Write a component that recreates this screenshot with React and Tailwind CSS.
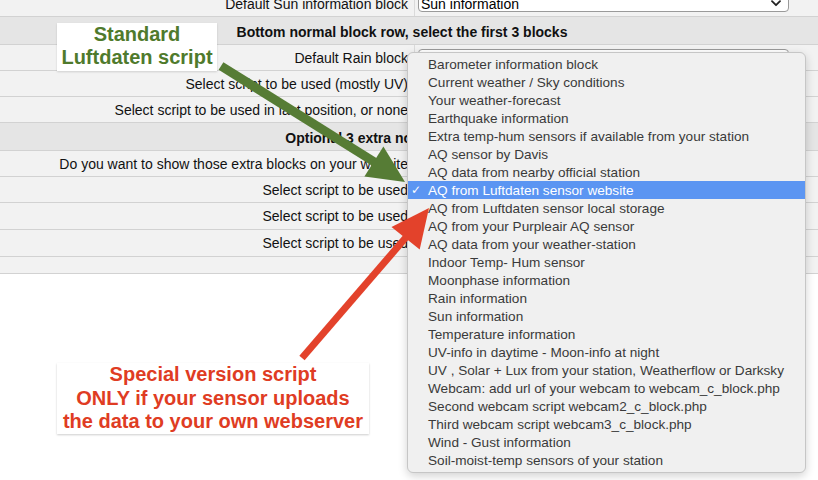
import React from "react";

const menuItems = [
  "Barometer information block",
  "Current weather / Sky conditions",
  "Your weather-forecast",
  "Earthquake information",
  "Extra temp-hum sensors if available from your station",
  "AQ sensor by Davis",
  "AQ data from nearby official station",
  "AQ from Luftdaten sensor website",
  "AQ from Luftdaten sensor local storage",
  "AQ from your Purpleair AQ sensor",
  "AQ data from your weather-station",
  "Indoor Temp- Hum sensor",
  "Moonphase information",
  "Rain information",
  "Sun information",
  "Temperature information",
  "UV-info in daytime - Moon-info at night",
  "UV , Solar + Lux from your station, Weatherflow or Darksky",
  "Webcam: add url of your webcam to webcam_c_block.php",
  "Second webcam script webcam2_c_block.php",
  "Third webcam script webcam3_c_block.php",
  "Wind - Gust information",
  "Soil-moist-temp sensors of your station",
];

const SELECTED = "AQ from Luftdaten sensor website";

function FakeSelect({ value }) {
  return (
    <div className="flex h-[17px] w-[371px] items-center justify-between rounded-[4px] border border-[#9a9a9a] bg-white pl-[2px] pr-[7px] text-[14px] leading-none text-black">
      <span>{value}</span>
      <svg width="10" height="7" viewBox="0 0 10 7">
        <path d="M1 1.2 L5 5.2 L9 1.2" fill="none" stroke="#222" strokeWidth="1.8" strokeLinecap="round" strokeLinejoin="round" />
      </svg>
    </div>
  );
}

function Row({ label, value, tall }) {
  return (
    <div className={`flex border-b border-[#d2d2d2] bg-[#f2f2f2] ${tall ? "h-[27px]" : "h-[26px]"}`}>
      <div className="w-[415px] shrink-0 overflow-hidden whitespace-nowrap border-r border-[#dadada] pr-[6px] text-right text-[14px] leading-[27px] text-[#111]">
        {label}
      </div>
      <div className="pl-[3px] pt-[4px]">
        <FakeSelect value={value} />
      </div>
    </div>
  );
}

function Header({ children }) {
  return (
    <div className="h-[28px] overflow-hidden border-b border-[#d2d2d2] bg-[#e5e5e5] pr-[14px] text-center text-[14px] font-bold leading-[30px] text-[#111]">
      {children}
    </div>
  );
}

export default function App() {
  return (
    <div className="relative h-[480px] w-[818px] overflow-hidden bg-white font-['Liberation_Sans',Arial,sans-serif]">
      <div className="-mt-[9px]">
        <Row label="Default Sun information block" value="Sun information" />
        <Header>Bottom normal block row, select the first 3 blocks</Header>
        <Row label="Default Rain block" value="Rain information" />
        <Row label="Select script to be used (mostly UV)" value="UV-info in daytime - Moon-info at night" />
        <Row label="Select script to be used in last position, or none" value="Temperature information" />
        <Header>Optional 3 extra normal blocks row</Header>
        <Row label="Do you want to show those extra blocks on your website" value="Yes" />
        <Row label="Select script to be used" value={SELECTED} />
        <Row label="Select script to be used" value="Moonphase information" tall />
        <Row label="Select script to be used" value="Webcam" tall />
        <div className="h-[17px] border-b border-[#d2d2d2] bg-[#f2f2f2]" />
      </div>

      {/* open select popup */}
      <div className="absolute left-[407px] top-[52px] w-[399px] rounded-[6px] border border-[#c6c6c6] bg-[#f0f0f0] pb-[3px] pt-[2px] shadow-[0_3px_10px_rgba(0,0,0,0.18)]">
        {menuItems.map((item) => {
          const active = item === SELECTED;
          return (
            <div
              key={item}
              className={`relative h-[18px] whitespace-nowrap pl-[20px] text-[13.6px] leading-[19px] ${
                active ? "bg-[#5b95f2] text-white" : "text-[#3a3a3a]"
              }`}
            >
              {active && (
                <span className="absolute left-[3px] top-0 font-['DejaVu_Sans',sans-serif] text-[12px]">✓</span>
              )}
              {item}
            </div>
          );
        })}
      </div>

      {/* annotation arrows */}
      <svg className="pointer-events-none absolute left-0 top-0" width="818" height="480" viewBox="0 0 818 480">
        <line x1="221" y1="66" x2="376" y2="163" stroke="#567c35" strokeWidth="9" />
        <polygon points="405,182 364.4,176.4 383.4,146.6" fill="#567c35" />
        <line x1="302" y1="358" x2="408" y2="235" stroke="#e3422b" strokeWidth="7" />
        <polygon points="429,208 419.7,249.5 391.5,226.9" fill="#e3422b" />
      </svg>

      <div className="absolute left-[57px] top-[23px] w-[160px] bg-white pb-[2px] text-center text-[20px] font-bold leading-[23px] text-[#4f7a2c] shadow-[0_1px_2px_rgba(0,0,0,0.15)]">
        <div>Standard</div>
        <div>Luftdaten script</div>
      </div>

      <div className="absolute left-[57px] top-[363px] w-[312px] bg-white text-center text-[20px] font-bold leading-[23.5px] text-[#df3c23] shadow-[0_1px_2px_rgba(0,0,0,0.2)]">
        <div>Special version script</div>
        <div>ONLY if your sensor uploads</div>
        <div>the data to your own webserver</div>
      </div>
    </div>
  );
}
